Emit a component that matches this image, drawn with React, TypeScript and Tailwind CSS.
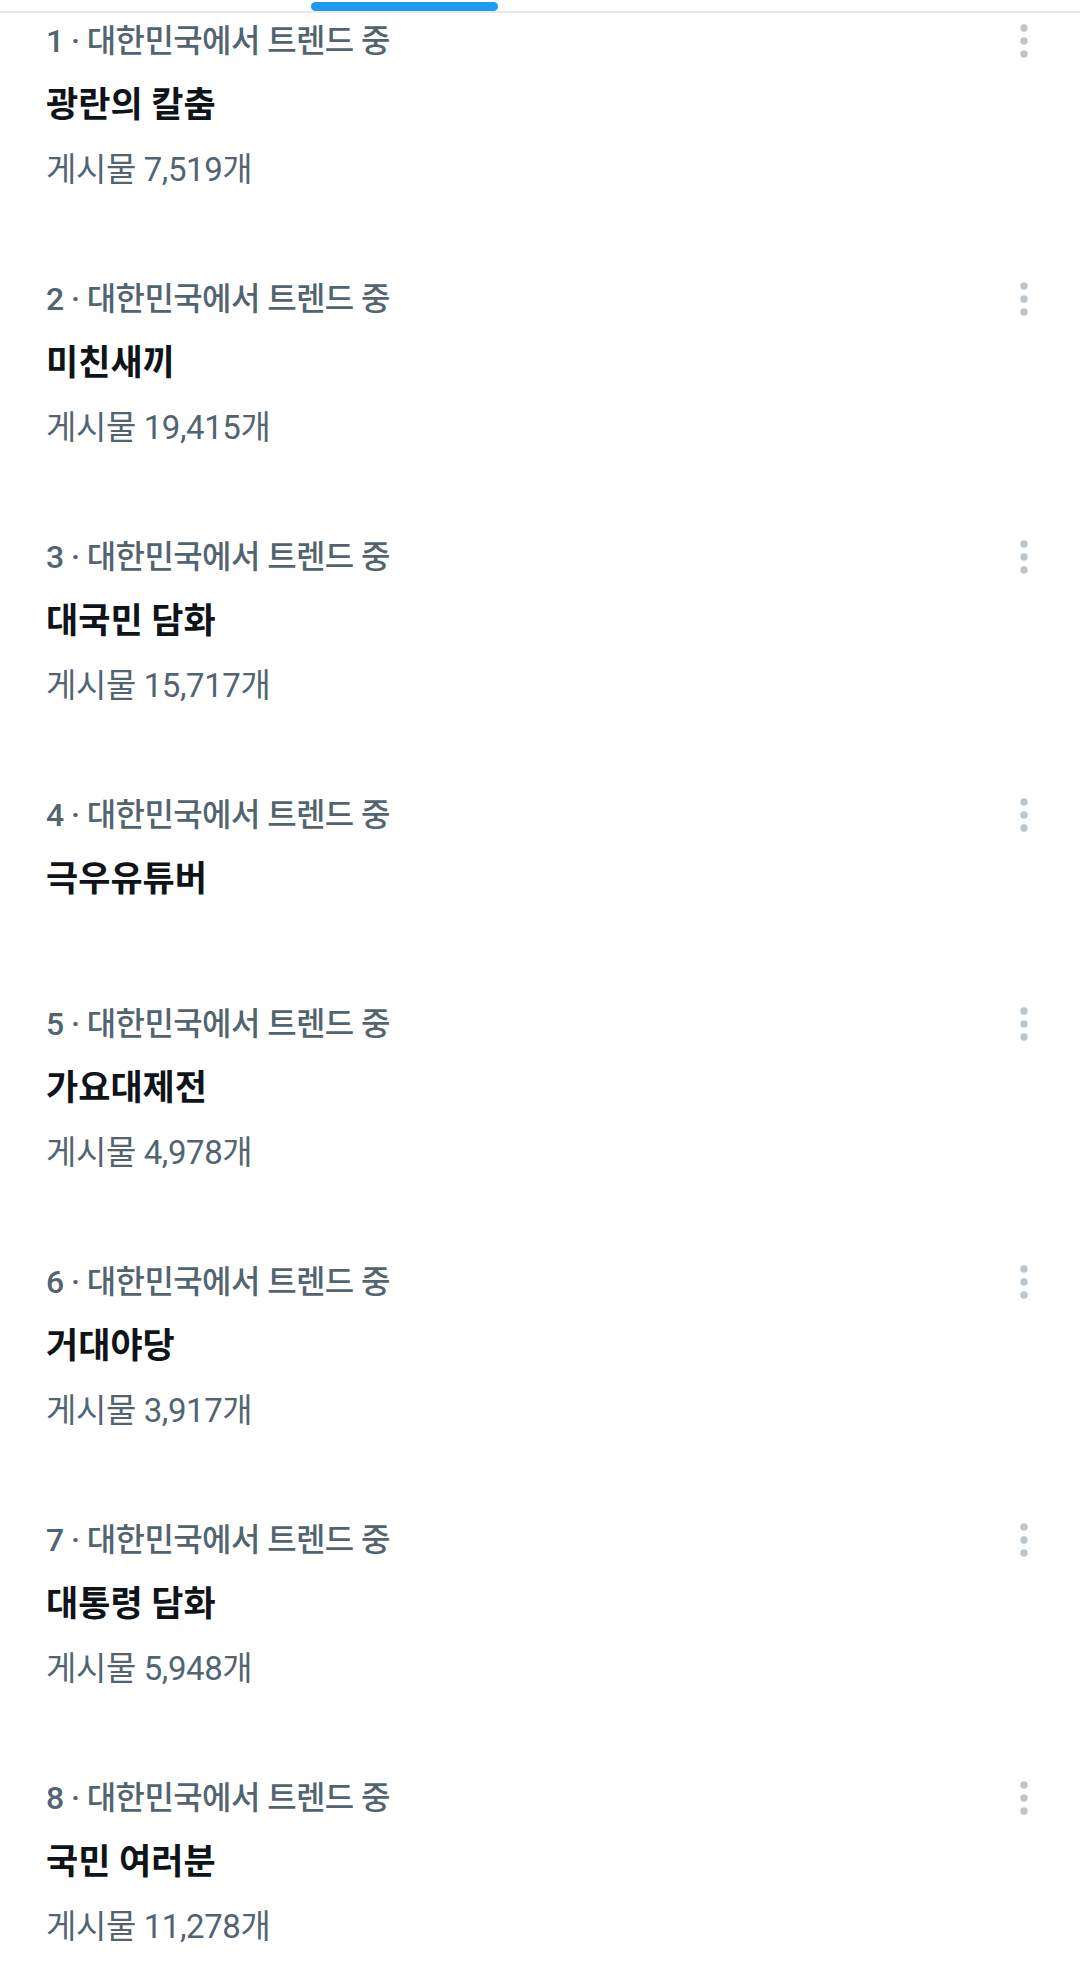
import React from 'react';

type Trend = {
    rank: number;
    title: string;
    posts?: string;
};

const trends: Trend[] = [
    { rank: 1, title: '광란의 칼춤', posts: '7,519' },
    { rank: 2, title: '미친새끼', posts: '19,415' },
    { rank: 3, title: '대국민 담화', posts: '15,717' },
    { rank: 4, title: '극우유튜버' },
    { rank: 5, title: '가요대제전', posts: '4,978' },
    { rank: 6, title: '거대야당', posts: '3,917' },
    { rank: 7, title: '대통령 담화', posts: '5,948' },
    { rank: 8, title: '국민 여러분', posts: '11,278' },
];

// Roboto for digits, CJK KR for hangul
const font = { fontFamily: 'Roboto, "Noto Sans CJK KR", "Noto Sans", sans-serif' };

function MoreIcon() {
    return (
        <svg width="12" height="36" viewBox="0 0 12 36" className="block">
            <circle cx="6" cy="5" r="3.7" fill="#b9c6ce" />
            <circle cx="6" cy="18" r="3.7" fill="#b9c6ce" />
            <circle cx="6" cy="31" r="3.7" fill="#b9c6ce" />
        </svg>
    );
}

function TrendRow({ trend }: { trend: Trend }) {
    return (
        <div className="pl-[46px] pr-[50px] pb-[79px]">
            <div className="flex h-[52px] items-center justify-between">
                <span className="text-[32px] font-medium tracking-[-0.6px] text-[#536471]">
                    {trend.rank} · 대한민국에서 트렌드 중
                </span>
                <MoreIcon />
            </div>
            <div className="flex h-[78px] items-center">
                <span className="text-[35px] font-bold text-[#0f1419]">
                    {trend.title}
                </span>
            </div>
            {trend.posts && (
                <div className="flex h-[49px] items-center">
                    <span className="text-[33px] font-normal tracking-[-0.4px] text-[#536471]">
                        게시물 {trend.posts}개
                    </span>
                </div>
            )}
        </div>
    );
}

export default function App() {
    return (
        <div className="min-h-screen w-[1080px] bg-white overflow-hidden" style={font}>
            {/* tab indicator */}
            <div className="flex h-[13px] items-end border-b-2 border-[#e7eaeb] pl-[311px]">
                <div className="h-[9px] w-[187px] rounded-full bg-[#1d9bf0]" />
            </div>
            <div className="flex flex-col pt-[2px]">
                {trends.map((t) => (
                    <TrendRow key={t.rank} trend={t} />
                ))}
            </div>
        </div>
    );
}
